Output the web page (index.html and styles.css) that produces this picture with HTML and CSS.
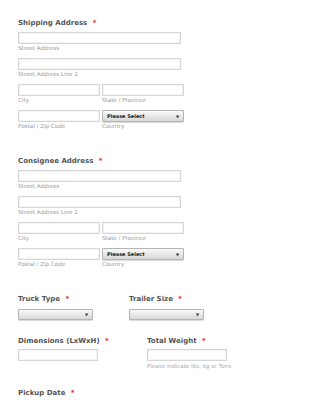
FILE: index.html
```html
<!DOCTYPE html>
<html lang="en">
<head>
  <meta charset="UTF-8">
  <title>Freight Quote</title>
  <link rel="stylesheet" href="styles.css">
</head>
<body>
  <form class="quote-form">
    <!-- Shipping -->
    <section class="group">
      <h3 class="group-title">Shipping Address <span class="req">*</span></h3>
      <div class="field">
        <div class="text-input wide"></div>
        <span class="sub-label">Street Address</span>
      </div>
      <div class="field">
        <div class="text-input wide"></div>
        <span class="sub-label">Street Address Line 2</span>
      </div>
      <div class="field-row shift">
        <div class="field half">
          <div class="text-input"></div>
          <span class="sub-label">City</span>
        </div>
        <div class="field half">
          <div class="text-input"></div>
          <span class="sub-label">State / Province</span>
        </div>
      </div>
      <div class="field-row">
        <div class="field half">
          <div class="text-input"></div>
          <span class="sub-label">Postal / Zip Code</span>
        </div>
        <div class="field half">
          <div class="select-box"><span>Please Select</span><i class="arrow">&#9660;</i></div>
          <span class="sub-label country">Country</span>
        </div>
      </div>
    </section>

    <!-- Consignee -->
    <section class="group">
      <h3 class="group-title">Consignee Address <span class="req">*</span></h3>
      <div class="field">
        <div class="text-input wide"></div>
        <span class="sub-label">Street Address</span>
      </div>
      <div class="field">
        <div class="text-input wide"></div>
        <span class="sub-label">Street Address Line 2</span>
      </div>
      <div class="field-row shift">
        <div class="field half">
          <div class="text-input"></div>
          <span class="sub-label">City</span>
        </div>
        <div class="field half">
          <div class="text-input"></div>
          <span class="sub-label">State / Province</span>
        </div>
      </div>
      <div class="field-row">
        <div class="field half">
          <div class="text-input"></div>
          <span class="sub-label">Postal / Zip Code</span>
        </div>
        <div class="field half">
          <div class="select-box"><span>Please Select</span><i class="arrow">&#9660;</i></div>
          <span class="sub-label country">Country</span>
        </div>
      </div>
    </section>

    <!-- Truck -->
    <section class="pair truck-pair">
      <div class="pair-col truck-col">
        <h3 class="group-title">Truck Type <span class="req">*</span></h3>
        <div class="select-box small"><span></span><i class="arrow">&#9660;</i></div>
      </div>
      <div class="pair-col">
        <h3 class="group-title">Trailer Size <span class="req">*</span></h3>
        <div class="select-box small"><span></span><i class="arrow">&#9660;</i></div>
      </div>
    </section>

    <!-- Dimensions -->
    <section class="pair dim-pair">
      <div class="pair-col dim-col">
        <h3 class="group-title">Dimensions (LxWxH) <span class="req">*</span></h3>
        <div class="text-input medium"></div>
      </div>
      <div class="pair-col">
        <h3 class="group-title">Total Weight <span class="req">*</span></h3>
        <div class="text-input medium"></div>
        <span class="note">Please indicate lbs, kg or Tons</span>
      </div>
    </section>

    <section class="group last">
      <h3 class="group-title">Pickup Date <span class="req">*</span></h3>
    </section>
  </form>
</body>
</html>
```

FILE: styles.css
```css
/* ===== Base ===== */
* {
  margin: 0;
  padding: 0;
  box-sizing: border-box;
}

body {
  background: #fff;
  font-family: "DejaVu Sans", Verdana, sans-serif;
  color: #555;
}

.quote-form {
  padding: 18px 0 0 18px;
}

/* ===== Headings ===== */
.group-title {
  font-size: 7px;
  line-height: 10px;
  font-weight: bold;
  color: #555;
  white-space: nowrap;
  margin-bottom: 4px;
}

.req {
  color: #e8262a;
  margin-left: 3px;
}

/* ===== Address groups ===== */
.group {
  margin-bottom: 20px;
}

.field {
  display: flex;
  flex-direction: column;
  margin-bottom: 5px;
}

.field-row {
  display: flex;
  gap: 2px;
}

.field-row.shift {
  margin-top: 1px;
}

.half {
  width: 82px;
}

.text-input {
  height: 12px;
  border: 1px solid #d6d6d6;
  background: #fff;
  box-shadow: inset 0 0 0 1px #f4f4f4;
}

.text-input.wide {
  width: 163px;
}

.text-input.medium {
  width: 80px;
}

.sub-label {
  font-size: 5.6px;
  line-height: 9px;
  color: #9a9a9a;
}

.sub-label.country {
  line-height: 7px;
  margin-top: 1px;
}

/* ===== Select ===== */
.select-box {
  height: 12px;
  display: flex;
  align-items: center;
  justify-content: space-between;
  padding: 0 4px 0 4px;
  border: 1px solid #b4b4b4;
  border-radius: 1px;
  background: linear-gradient(#fafafa, #d8d8d8);
  box-shadow: 0 1px 1px rgba(0,0,0,0.15);
  font-size: 5px;
  font-weight: bold;
  color: #222;
}

.select-box.small {
  width: 75px;
  height: 11px;
}

.arrow {
  font-style: normal;
  font-size: 4px;
  color: #333;
}

/* ===== Paired fields ===== */
.pair {
  display: flex;
}

.truck-pair {
  margin-bottom: 16px;
}

.truck-pair .group-title {
  margin-bottom: 5px;
}

.truck-col {
  width: 111px;
}

.dim-pair {
  margin-bottom: 17px;
}

.dim-pair .group-title {
  margin-bottom: 3px;
}

.dim-col {
  width: 129px;
}

.note {
  display: block;
  font-size: 5.6px;
  line-height: 10px;
  color: #aaa;
}
```
